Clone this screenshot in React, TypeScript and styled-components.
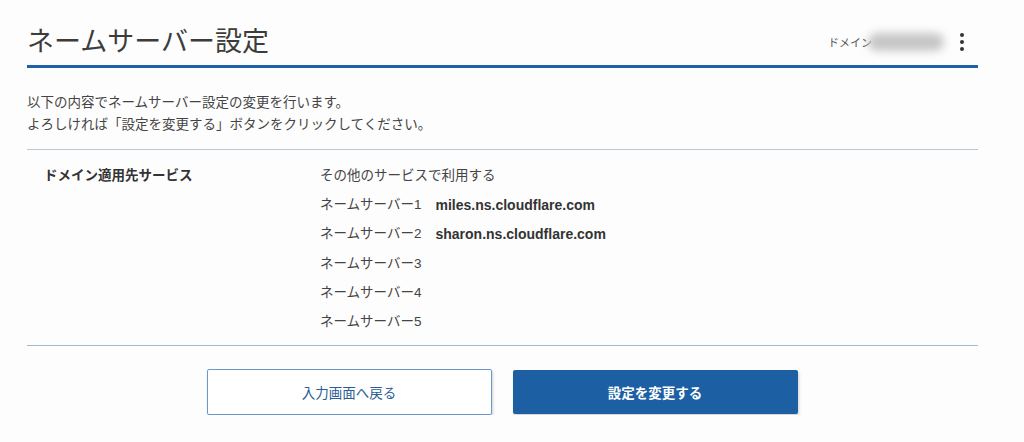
import React from "react";
import styled, { createGlobalStyle } from "styled-components";

const Global = createGlobalStyle`
  html, body { margin: 0; padding: 0; background: #fdfdfd; }
  body {
    font-family: "Liberation Sans", "Noto Sans CJK JP", "Noto Sans", sans-serif;
    color: #3a3a3a;
  }
`;

const Page = styled.div`
  width: 951px;
  margin-left: 27px;
`;

const Header = styled.header`
  display: flex;
  align-items: flex-end;
  justify-content: space-between;
  height: 68px;
  padding-bottom: 5px;
  box-sizing: border-box;
  border-bottom: 3px solid #1d62a6;
`;

const Title = styled.h1`
  margin: 0;
  font-size: 27px;
  font-weight: 400;
  color: #3c3c3c;
  line-height: 36px;
`;

const DomainBox = styled.div`
  display: flex;
  align-items: center;
  height: 36px;
  margin-right: 14px;
`;

const DomainLabel = styled.span`
  font-size: 11px;
  color: #555;
`;

const Blur = styled.span`
  display: inline-block;
  width: 76px;
  height: 18px;
  border-radius: 9px;
  background: #c6c6c6;
  filter: blur(4px);
  margin-left: -4px;
`;

const Kebab = styled.div`
  display: flex;
  flex-direction: column;
  gap: 3px;
  margin-left: 16px;
  span {
    width: 4px;
    height: 4px;
    border-radius: 50%;
    background: #333;
  }
`;

const Intro = styled.p`
  margin: 24px 0 0;
  font-size: 13.5px;
  line-height: 22px;
  color: #444;
`;

const Table = styled.div`
  margin-top: 13px;
  border-top: 1px solid #b9c6d3;
  border-bottom: 1px solid #9dbad8;
  display: grid;
  grid-template-columns: 276px 1fr;
  padding: 16px 0 13px 17px;
`;

const Th = styled.div`
  font-size: 13.5px;
  font-weight: 700;
  color: #333;
  line-height: 20px;
`;

const Values = styled.div`
  display: flex;
  flex-direction: column;
  gap: 9.2px;
`;

const Row = styled.div`
  display: flex;
  align-items: center;
  height: 20px;
  font-size: 13.5px;
  line-height: 20px;
  color: #444;
`;

const NsLabel = styled.span`
  margin-right: 14px;
`;

const NsValue = styled.span`
  font-size: 14px;
  line-height: 20px;
  font-weight: 700;
  color: #333;
`;

const Buttons = styled.div`
  display: flex;
  justify-content: center;
  align-items: flex-start;
  gap: 21px;
  margin-top: 23px;
  padding-right: 1px;
`;

const Button = styled.button<{ $primary?: boolean }>`
  width: 285px;
  height: ${(p) => (p.$primary ? "44px" : "46px")};
  box-sizing: border-box;
  font-family: inherit;
  font-size: 13.5px;
  font-weight: ${(p) => (p.$primary ? 700 : 400)};
  color: ${(p) => (p.$primary ? "#fff" : "#2a5d94")};
  background: ${(p) => (p.$primary ? "#1c60a3" : "#fff")};
  border: ${(p) => (p.$primary ? "none" : "1.5px solid #6a98cb")};
  border-radius: 2px;
  box-shadow: 1px 2px 3px rgba(0, 0, 0, 0.18);
  cursor: pointer;
  margin-top: ${(p) => (p.$primary ? "1px" : "0")};
`;

const servers = [
  "miles.ns.cloudflare.com",
  "sharon.ns.cloudflare.com",
  "",
  "",
  "",
];

export default function App() {
  return (
    <>
      <Global />
      <Page>
        <Header>
          <Title>ネームサーバー設定</Title>
          <DomainBox>
            <DomainLabel>ドメイン</DomainLabel>
            <Blur />
            <Kebab>
              <span />
              <span />
              <span />
            </Kebab>
          </DomainBox>
        </Header>
        <Intro>
          以下の内容でネームサーバー設定の変更を行います。
          <br />
          よろしければ「設定を変更する」ボタンをクリックしてください。
        </Intro>
        <Table>
          <Th>ドメイン適用先サービス</Th>
          <Values>
            <Row>その他のサービスで利用する</Row>
            {servers.map((s, i) => (
              <Row key={i}>
                <NsLabel>ネームサーバー{i + 1}</NsLabel>
                {s && <NsValue>{s}</NsValue>}
              </Row>
            ))}
          </Values>
        </Table>
        <Buttons>
          <Button>入力画面へ戻る</Button>
          <Button $primary>設定を変更する</Button>
        </Buttons>
      </Page>
    </>
  );
}
